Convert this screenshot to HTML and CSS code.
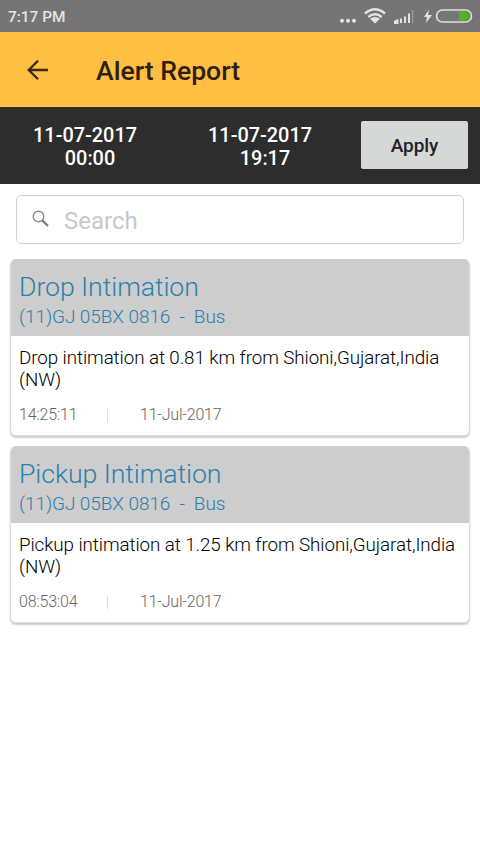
FILE: index.html
```html
<!DOCTYPE html>
<html lang="en"><head><meta charset="utf-8"><title>Alert Report</title><link rel="stylesheet" href="styles.css"></head>
<body>
<div class="status"><span class="time">7:17 PM</span>
<svg class="status-icons" width="140" height="32" viewBox="340 0 140 32">
<g fill="#e4e4e4"><circle cx="342" cy="20.800" r="2"/><circle cx="348" cy="20.800" r="2"/><circle cx="354" cy="20.800" r="2"/></g>
<g fill="none" stroke="#e4e4e4" stroke-width="2.300"><path d="M365 13.500q10-8.500 20 0M368.300 17q6.700-5.500 13.400 0"/></g><path d="M370 18.800q5-3.600 10 0l-5 4.700z" fill="#e4e4e4"/>
<path d="M395 23v-1.500l2.500-1V23zM401 18.500v4.500M405 16.500v6.500M409 13.500v9.500" stroke="#e4e4e4" fill="#e4e4e4" stroke-width="2"/><path d="M412.700 10v13" stroke="#999" stroke-width="1.500"/>
<path d="M429 9.500l-5 7.500h3l-1 6 6-8h-4z" fill="#e4e4e4"/>
<rect x="436.500" y="10" width="35" height="12" rx="6" fill="none" stroke="#dedede" stroke-width="1.700"/><path d="M459 11.500h6a4.500 4.500 0 0 1 0 9h-6z" fill="#51b51e"/>
</svg></div>
<header class="bar"><svg class="back" width="24" height="24" viewBox="0 0 24 24"><path d="M22 12H3M12 2.700L2.700 12l9.300 9.300" fill="none" stroke="#382a12" stroke-width="2.300"/></svg><h1>Alert Report</h1></header>
<section class="filter"><div class="date">11-07-2017&nbsp;&nbsp;<br>00:00</div><div class="date">11-07-2017&nbsp;&nbsp;<br>19:17</div><button class="apply">Apply</button></section>
<label class="search"><svg width="18" height="18" viewBox="0 0 18 18"><circle cx="6.500" cy="6.500" r="5.300" fill="none" stroke="#888" stroke-width="1.400"/><path d="M10.500 10.500l5.500 5.500" stroke="#777" stroke-width="2.200"/></svg><span>Search</span></label>
<main class="list">
<article class="card"><header class="head"><h2>Drop Intimation</h2><p>(11)GJ 05BX 0816&nbsp; -&nbsp; Bus</p></header><p class="msg">Drop intimation at 0.81 km from Shioni,Gujarat,India (NW)</p><footer class="meta"><span class="clock">14:25:11</span><i></i><span class="day">11-Jul-2017</span></footer></article>
<article class="card"><header class="head"><h2>Pickup Intimation</h2><p>(11)GJ 05BX 0816&nbsp; -&nbsp; Bus</p></header><p class="msg">Pickup intimation at 1.25 km from Shioni,Gujarat,India (NW)</p><footer class="meta"><span class="clock">08:53:04</span><i></i><span class="day">11-Jul-2017</span></footer></article>
</main>
</body></html>
```
FILE: styles.css
```css
*{box-sizing:border-box}
body,h1,h2,p{margin:0}
body{height:853px;background:#fff;font-family:Roboto,"Liberation Sans",sans-serif;overflow:hidden}
.status{height:32px;background:#757575;display:flex;align-items:center;justify-content:space-between;padding:0 0 0 8px}
.time{font-size:15.400px;color:#e4e4e4;font-weight:500;padding-top:2px}
.bar{height:75px;background:#ffbf43;display:flex;align-items:center;padding:0 0 0 26px}
.back{margin-right:46px}
h1{font-size:26.600px;font-weight:500;color:#30200f;line-height:32px;padding-top:3px}
.filter{height:77px;background:#2d2d2d;display:flex;align-items:center}
.date{width:175px;padding:2px 0 0 5px;text-align:center;color:#fff;font-size:19.900px;font-weight:500;line-height:23px}
.apply{width:107px;height:48px;margin:0 0 2px 11px;padding:2px 0 0;border:0;border-radius:2px;background:#d6d8d8;color:#222;font:500 19px Roboto,sans-serif;letter-spacing:-.1px}
.search{height:49px;margin:11px 16px 15px;border:1px solid #d2d2d2;border-radius:5px;display:flex;align-items:center;padding-left:15px;color:#c8c8c8;font-size:24px}
.search svg{margin:0 14px 2px 0}
.search span{padding-top:2px}
.list{padding:0 10px;display:flex;flex-direction:column;gap:10px}
.card{height:177px;border-radius:6px;background:#fff;border:1px solid #ddd;border-top:0;box-shadow:0 2px 2px #0003;overflow:hidden}
.head{height:77px;background:#cdcdcd;color:#2d80ae;padding:11px 8px}
h2{font-size:26.700px;line-height:34px;font-weight:300;letter-spacing:-.08px}
.head p{font-size:19px;line-height:26px;font-weight:300;letter-spacing:-.08px}
.msg{font-size:18.800px;font-weight:300;line-height:22px;color:#000;padding:11px 8px 0;letter-spacing:-.08px}
.meta{display:flex;align-items:center;font-size:16px;font-weight:300;line-height:20px;color:#666;padding:14px 8px 0;letter-spacing:-.2px}
.clock{width:88px}.meta i{width:1px;height:13px;background:#ddd}.day{margin-left:32px}
```
